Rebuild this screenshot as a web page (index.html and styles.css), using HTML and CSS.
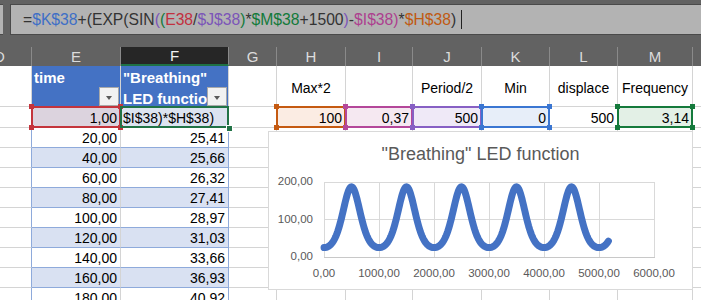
FILE: index.html
```html
<!DOCTYPE html>
<html lang="en">
<head>
  <meta charset="UTF-8" />
  <meta name="viewport" content="width=device-width, initial-scale=1.0"/>
  <title>Breathing LED - Sheet</title>
  <link rel="stylesheet" href="styles.css">
</head>
<body>
  <div class="app">
    <!-- formula bar -->
    <div class="formula-bar">
      <div class="name-box"></div>
      <div class="formula">=<span class="f-blue">$K$38</span>+(EXP(SIN<span class="f-purple">(</span><span class="f-green">(</span><span class="f-red">E38</span>/<span class="f-purple">$J$38</span><span class="f-green">)</span>*<span class="f-green">$M$38</span>+1500<span class="f-purple">)</span>-<span class="f-pink">$I$38</span><span class="f-pink">)</span>*<span class="f-orange">$H$38</span>)<span class="caret"></span></div>
    </div>

    <div class="sheet">
      <div class="row heads">
        <div>D</div><div>E</div><div class="sel">F</div><div>G</div><div>H</div><div>I</div><div>J</div><div>K</div><div>L</div><div>M</div><div>N</div>
      </div>

      <div class="row r37">
        <div class="tl"></div>
        <div class="th">time<span class="dd"></span></div>
        <div class="th">"Breathing"<br>LED function<span class="dd"></span></div>
        <div></div>
        <div class="lbl">Max*2</div>
        <div></div>
        <div class="lbl">Period/2</div>
        <div class="lbl">Min</div>
        <div class="lbl">displace</div>
        <div class="lbl">Frequency</div>
        <div></div>
      </div>

      <div class="row r38 tbl">
        <div class="tl"></div>
        <div class="tb band rng" style="--c:#c4343c;background:#dcd3de">1,00</div>
        <div class="tb band active">$I$38)*$H$38)</div>
        <div></div>
        <div class="rng" style="--c:#c55a11;background:#fbece3">100</div>
        <div class="rng" style="--c:#b4479a;background:#f5e8f1">0,37</div>
        <div class="rng" style="--c:#8760c4;background:#efe9f7">500</div>
        <div class="rng" style="--c:#3a76d2;background:#e7eef9">0</div>
        <div>500</div>
        <div class="rng" style="--c:#157a3c;background:#e3f0e6">3,14</div>
        <div></div>
      </div>

      <div class="row tbl"><div class="tl"></div><div class="tb">20,00</div><div class="tb">25,41</div><div></div><div></div><div></div><div></div><div></div><div></div><div></div><div></div></div>
      <div class="row tbl"><div class="tl"></div><div class="tb band">40,00</div><div class="tb band">25,66</div><div></div><div></div><div></div><div></div><div></div><div></div><div></div><div></div></div>
      <div class="row tbl"><div class="tl"></div><div class="tb">60,00</div><div class="tb">26,32</div><div></div><div></div><div></div><div></div><div></div><div></div><div></div><div></div></div>
      <div class="row tbl"><div class="tl"></div><div class="tb band">80,00</div><div class="tb band">27,41</div><div></div><div></div><div></div><div></div><div></div><div></div><div></div><div></div></div>
      <div class="row tbl"><div class="tl"></div><div class="tb">100,00</div><div class="tb">28,97</div><div></div><div></div><div></div><div></div><div></div><div></div><div></div><div></div></div>
      <div class="row tbl"><div class="tl"></div><div class="tb band">120,00</div><div class="tb band">31,03</div><div></div><div></div><div></div><div></div><div></div><div></div><div></div><div></div></div>
      <div class="row tbl"><div class="tl"></div><div class="tb">140,00</div><div class="tb">33,66</div><div></div><div></div><div></div><div></div><div></div><div></div><div></div><div></div></div>
      <div class="row tbl"><div class="tl"></div><div class="tb band">160,00</div><div class="tb band">36,93</div><div></div><div></div><div></div><div></div><div></div><div></div><div></div><div></div></div>
      <div class="row tbl"><div class="tl"></div><div class="tb">180,00</div><div class="tb">40,92</div><div></div><div></div><div></div><div></div><div></div><div></div><div></div><div></div></div>
    </div>

    <!-- embedded chart floating over H39:M46 -->
    <div class="chart">
      <div class="chart-title">"Breathing" LED function</div>
      <svg class="plot" width="423" height="123" viewBox="0 34 423 123">
        <g class="grid">
          <line x1="55" y1="50.5" x2="385" y2="50.5"/>
          <line x1="55" y1="87.5" x2="385" y2="87.5"/>
          <line x1="55.5" y1="50" x2="55.5" y2="125"/>
          <line x1="110.5" y1="50" x2="110.5" y2="125"/>
          <line x1="165.5" y1="50" x2="165.5" y2="125"/>
          <line x1="220.5" y1="50" x2="220.5" y2="125"/>
          <line x1="275.5" y1="50" x2="275.5" y2="125"/>
          <line x1="330.5" y1="50" x2="330.5" y2="125"/>
          <line x1="385.5" y1="50" x2="385.5" y2="125"/>
          <line class="axis" x1="55" y1="125.5" x2="386" y2="125.5"/>
        </g>
        <g class="ylab">
          <text x="44" y="50">200,00</text>
          <text x="44" y="88">100,00</text>
          <text x="44" y="125">0,00</text>
        </g>
        <g class="xlab">
          <text x="55" y="142">0,00</text>
          <text x="110" y="142">1000,00</text>
          <text x="165" y="142">2000,00</text>
          <text x="220" y="142">3000,00</text>
          <text x="275" y="142">4000,00</text>
          <text x="330" y="142">5000,00</text>
          <text x="385" y="142">6000,00</text>
        </g>
        <polyline id="curve" class="curve" points=""/>
      </svg>
    </div>
  </div>

  <script>
    // build the breathing curve from the sheet's formula shape
    const pts = [];
    for (let t = 1; t <= 5180; t += 10) {
      const v = 25 + 69 * (Math.exp(-Math.cos(2 * Math.PI * t / 1000)) - Math.exp(-1));
      const x = 55 + t * 0.055;
      const y = 125 - v * 0.375;
      pts.push(x.toFixed(2) + ',' + y.toFixed(2));
    }
    document.getElementById('curve').setAttribute('points', pts.join(' '));
  </script>
</body>
</html>
```

FILE: styles.css
```css
/* ===== Base ===== */
* {
  margin: 0;
  padding: 0;
  box-sizing: border-box;
}
html, body {
  width: 701px;
  height: 300px;
  overflow: hidden;
  background: #fff;
  font-family: "Liberation Sans", Arial, sans-serif;
  color: #000;
}
.app {
  position: relative;
  width: 701px;
  height: 300px;
  overflow: hidden;
}

/* ===== Formula bar ===== */
.formula-bar {
  display: flex;
  gap: 7px;
  height: 47px;
  padding-top: 4px;
  background: #626262;
}
.name-box {
  width: 3px;
  height: 31px;
  background: #b3b3b3;
  border-top: 1px solid #4a4a4a;
  border-bottom: 1px solid #4a4a4a;
}
.formula {
  flex: 1;
  height: 31px;
  padding-left: 12px;
  background: #b3b3b3;
  border: 1px solid #4a4a4a;
  border-right: none;
  font-size: 15.7px;
  line-height: 29px;
  color: #333;
  white-space: nowrap;
}
.f-blue { color: #3e6fc6; }
.f-red { color: #c2303f; }
.f-purple { color: #7b55b8; }
.f-green { color: #127a3a; }
.f-pink { color: #ad3f8f; }
.f-orange { color: #c05a12; }
.caret {
  display: inline-block;
  width: 1px;
  height: 19px;
  margin-left: 5px;
  vertical-align: -4px;
  background: #222;
}

/* ===== Sheet grid ===== */
.sheet {
  margin-left: -32px;
}
.row {
  display: grid;
  grid-template-columns: 64px 89px 108px 48px 69px 67px 69px 68px 68px 75px 64px;
  height: 20px;
}
.row > div {
  position: relative;
  display: flex;
  align-items: flex-end;
  justify-content: flex-end;
  padding: 0 3px;
  border-right: 1px solid #d4d4d4;
  border-bottom: 1px solid #d4d4d4;
  font-size: 14px;
  line-height: 17px;
  white-space: nowrap;
}

/* column letters */
.row.heads {
  height: 19px;
  background: #626262;
}
.row.heads > div {
  justify-content: center;
  align-items: center;
  border-bottom: none;
  border-right-color: #8a8a8a;
  color: #dcdcdc;
  font-size: 15px;
}
.row.heads > .sel {
  background: #262626;
  color: #f2f2f2;
  border-bottom: 2px solid #1e7145;
}

/* header row of the table */
.row.r37 {
  height: 41px;
}
.row > .th {
  display: block;
  padding: 1px 2px 0;
  background: #4472c4;
  color: #fff;
  font-size: 15px;
  font-weight: bold;
  line-height: 21px;
  text-align: left;
  overflow: hidden;
}
.row > .lbl {
  justify-content: center;
  align-items: center;
  padding-top: 5px;
}
.dd {
  position: absolute;
  right: 1px;
  bottom: 0;
  width: 20px;
  height: 19px;
  background: #f2f2f2;
  border: 1px solid #a9a9a9;
}
.dd::after {
  content: "";
  position: absolute;
  left: 6px;
  top: 8px;
  border-left: 3.5px solid transparent;
  border-right: 3.5px solid transparent;
  border-top: 4px solid #595959;
}

/* table body */
.row.r38 {
  height: 21px;
}
.row.tbl > .tl {
  border-right-color: #8eaadb;
}
.row > .tb {
  border-bottom-color: #8eaadb;
}
.row > .tb + .tb {
  border-right-color: #8eaadb;
}
.row > .band {
  background: #d9e1f2;
}

/* reference highlight boxes */
.rng::before {
  content: "";
  position: absolute;
  left: -1px;
  top: -1px;
  right: -1px;
  bottom: -1px;
  border: 2px solid var(--c);
  z-index: 1;
}
.rng::after {
  content: "";
  position: absolute;
  left: -3px;
  top: -3px;
  right: -3px;
  bottom: -3px;
  z-index: 2;
  background:
    linear-gradient(var(--c), var(--c)) left top / 5px 5px no-repeat,
    linear-gradient(var(--c), var(--c)) right top / 5px 5px no-repeat,
    linear-gradient(var(--c), var(--c)) left bottom / 5px 5px no-repeat,
    linear-gradient(var(--c), var(--c)) right bottom / 5px 5px no-repeat;
}
.row > .active {
  justify-content: flex-start;
  padding-left: 2px;
  background: #dce3f0;
}
.active::before {
  content: "";
  position: absolute;
  left: -1px;
  top: -1px;
  right: -1px;
  bottom: -1px;
  border: 2px solid #217346;
  z-index: 3;
}
.active::after {
  content: "";
  position: absolute;
  right: -4px;
  bottom: -4px;
  width: 5px;
  height: 5px;
  background: #217346;
  outline: 1px solid #fff;
  z-index: 4;
}

/* ===== Chart ===== */
.chart {
  position: absolute;
  left: 268px;
  top: 131px;
  width: 425px;
  height: 159px;
  z-index: 10;
  display: flex;
  flex-direction: column;
  background: #fff;
  border: 1px solid #d9d9d9;
}
.chart-title {
  padding-top: 11px;
  height: 34px;
  font-size: 18px;
  line-height: 22px;
  text-align: center;
  color: #595959;
}
.plot {
  display: block;
}
.grid line {
  stroke: #d9d9d9;
  stroke-width: 1;
}
.grid .axis {
  stroke: #c8c8c8;
}
.ylab text,
.xlab text {
  font-family: "Liberation Sans", Arial, sans-serif;
  font-size: 11.5px;
  fill: #595959;
  dominant-baseline: middle;
}
.ylab text {
  text-anchor: end;
}
.xlab text {
  text-anchor: middle;
}
.curve {
  fill: none;
  stroke: #4472c4;
  stroke-width: 7;
  stroke-linecap: round;
  stroke-linejoin: round;
}
```
